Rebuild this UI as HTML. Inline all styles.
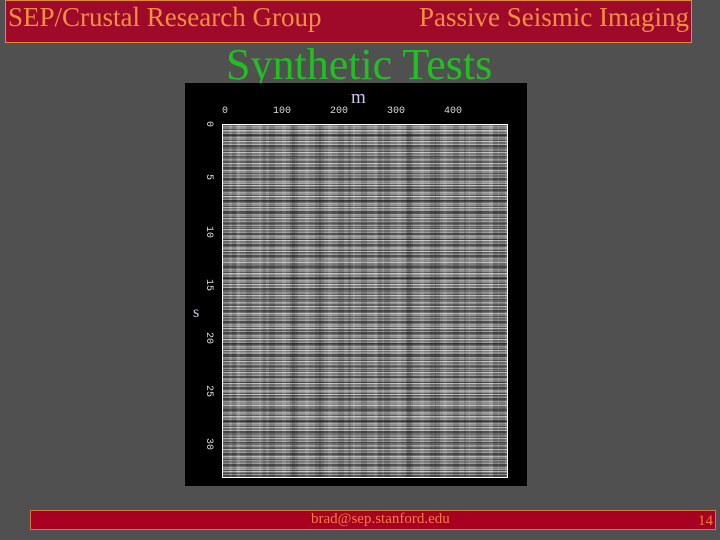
<!DOCTYPE html>
<html><head><style>
body{margin:0;width:720px;height:540px;background:#505050;position:relative;overflow:hidden;font-family:"Liberation Serif",serif}
.hdr{position:absolute;left:5px;top:0;width:685px;height:41px;background:#a00a2a;border:1px solid #e08a3a;color:#f09040;font-size:27px}
.ftr{position:absolute;left:30px;top:510px;width:684px;height:18px;background:#a80020;border:1px solid #d07a3a;color:#f08040;font-size:15px}
.img{position:absolute;left:185px;top:83px;width:342px;height:403px;background:#000}
.plot{position:absolute;left:37px;top:41px;width:284px;height:352px;border:1px solid #fff;
background:
repeating-linear-gradient(0deg,rgba(0,0,0,.25) 0 2px,transparent 2px 5px,rgba(255,255,255,.2) 5px 6px,transparent 6px 11px),
repeating-linear-gradient(0deg,transparent 0 3px,rgba(0,0,0,.3) 3px 4px,transparent 4px 7px,rgba(255,255,255,.25) 7px 8px,transparent 8px 13px),
repeating-linear-gradient(90deg,rgba(0,0,0,.15) 0 6px,transparent 6px 13px,rgba(255,255,255,.12) 13px 17px,transparent 17px 23px),
repeating-linear-gradient(90deg,transparent 0 9px,rgba(0,0,0,.15) 9px 14px,transparent 14px 29px),
repeating-linear-gradient(0deg,#6a6a6a 0 2px,#a0a0a0 2px 3px,#7a7a7a 3px 5px,#b8b8b8 5px 6px,#5a5a5a 6px 7px,#909090 7px 9px,#a8a8a8 9px 10px,#707070 10px 11px);}
.t{position:absolute;color:#ddd;font-size:10px;font-family:"Liberation Mono",monospace}
.l{position:absolute;color:#ddd;font-size:10px;font-family:"Liberation Mono",monospace;transform:rotate(90deg);transform-origin:left top}
</style></head><body>
<div class="hdr"><span style="position:absolute;left:2px;top:1px">SEP/Crustal Research Group</span><span style="position:absolute;right:2px;top:1px">Passive Seismic Imaging</span></div>
<div style="position:absolute;left:226px;top:40px;color:#20c020;font-size:44px;line-height:50px">Synthetic Tests</div>
<div class="img">
<div style="position:absolute;left:166px;top:4px;color:#c8c8f0;font-size:19px">m</div>
<div class="t" style="left:37px;top:23px">0</div>
<div class="t" style="left:88px;top:23px">100</div>
<div class="t" style="left:145px;top:23px">200</div>
<div class="t" style="left:202px;top:23px">300</div>
<div class="t" style="left:259px;top:23px">400</div>
<div class="l" style="left:29px;top:38px">0</div>
<div class="l" style="left:29px;top:91px">5</div>
<div class="l" style="left:29px;top:143px">10</div>
<div class="l" style="left:29px;top:196px">15</div>
<div class="l" style="left:29px;top:249px">20</div>
<div class="l" style="left:29px;top:302px">25</div>
<div class="l" style="left:29px;top:355px">30</div>
<div style="position:absolute;left:8px;top:221px;color:#c8c8f0;font-size:16px">s</div>
<div class="plot"></div>
</div>
<div class="ftr"><span style="position:absolute;left:280px;top:0">brad@sep.stanford.edu</span><span style="position:absolute;right:2px;top:2px">14</span></div>
</body></html>
